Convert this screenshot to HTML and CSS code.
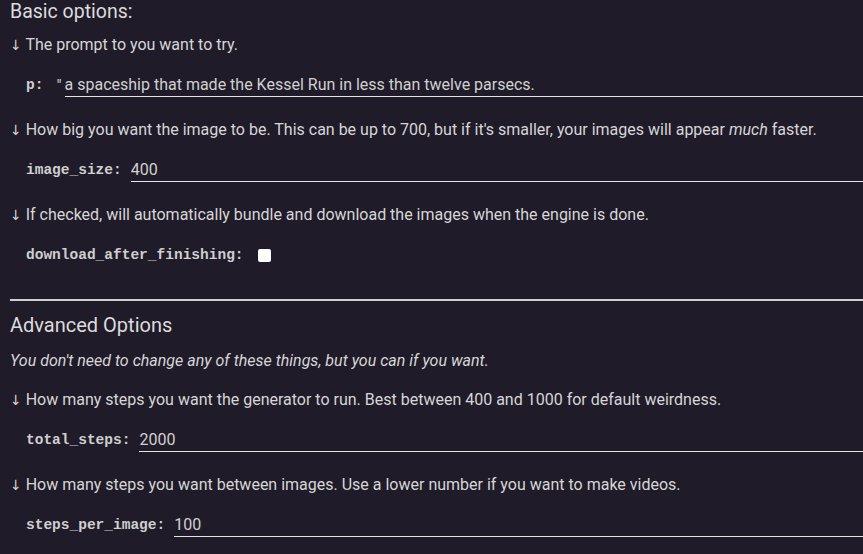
FILE: index.html
```html
<!DOCTYPE html>
<html lang="en">
<head>
  <meta charset="UTF-8">
  <title>Engine options</title>
  <link rel="stylesheet" href="styles.css">
</head>
<body>
  <div class="form">
    <h2 class="heading">Basic options:</h2>

    <div class="desc"><span class="arrow">↓</span> The prompt to you want to try.</div>
    <div class="row">
      <span class="label">p:</span>
      <span class="prefix">"</span>
      <input class="field" type="text" value="a spaceship that made the Kessel Run in less than twelve parsecs.">
    </div>

    <div class="desc"><span class="arrow">↓</span> How big you want the image to be. This can be up to 700, but if it's smaller, your images will appear <em>much</em> faster.</div>
    <div class="row">
      <span class="label">image_size:</span>
      <input class="field" type="text" value="400">
    </div>

    <div class="desc"><span class="arrow">↓</span> If checked, will automatically bundle and download the images when the engine is done.</div>
    <div class="row">
      <span class="label">download_after_finishing:</span>
      <span class="check"></span>
    </div>

    <hr class="divider">

    <h2 class="heading">Advanced Options</h2>
    <div class="desc note"><em>You don't need to change any of these things, but you can if you want.</em></div>

    <div class="desc"><span class="arrow">↓</span> How many steps you want the generator to run. Best between 400 and 1000 for default weirdness.</div>
    <div class="row">
      <span class="label">total_steps:</span>
      <input class="field" type="text" value="2000">
    </div>

    <div class="desc"><span class="arrow">↓</span> How many steps you want between images. Use a lower number if you want to make videos.</div>
    <div class="row">
      <span class="label">steps_per_image:</span>
      <input class="field" type="text" value="100">
    </div>
  </div>
</body>
</html>
```

FILE: styles.css
```css
body {
  margin: 0;
  background: #201b29;
  color: #d6d6d6;
  font-family: Roboto, "Liberation Sans", sans-serif;
  overflow: hidden;
}
.form {
  display: flex;
  flex-direction: column;
  padding-left: 10px;
}
.heading {
  margin: 0 0 11px;
  height: 24px;
  line-height: 24px;
  font-size: 19.5px;
  font-weight: 400;
  color: #dcdcdc;
}
.desc {
  height: 20px;
  line-height: 20px;
  font-size: 16px;
  white-space: nowrap;
}
.arrow {
  font-family: "DejaVu Sans", sans-serif;
  font-size: 14px;
}
.note {
  margin-bottom: 19px;
}
.row {
  display: flex;
  align-items: center;
  height: 24px;
  margin: 18px 0 23px;
  padding-left: 16px;
}
.label {
  font-family: "Liberation Mono", monospace;
  font-weight: bold;
  font-size: 14.5px;
  color: #cfcfcf;
  margin-right: 9px;
}
.prefix {
  font-size: 16px;
  margin: 0 3px 0 4px;
  color: #d0d0d0;
}
.field {
  flex: 1;
  height: 24px;
  box-sizing: border-box;
  border: 0;
  border-bottom: 1px solid #e6e6e6;
  background: transparent;
  color: #d0d0d0;
  font-family: Roboto, "Liberation Sans", sans-serif;
  font-size: 16px;
  padding: 0;
  outline: none;
}
.check {
  width: 13px;
  height: 13px;
  margin-left: 5px;
  background: #fff;
  border-radius: 2px;
}
.divider {
  margin: 9px 0 12px;
  border: 0;
  height: 2px;
  background: #d0d0d0;
}
.divider + .heading {
  font-size: 20px;
  margin-bottom: 14px;
}
```
